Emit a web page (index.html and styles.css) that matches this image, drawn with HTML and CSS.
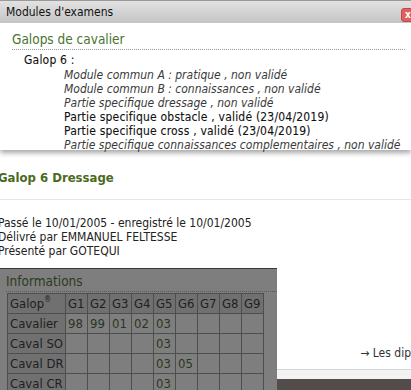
FILE: index.html
```html
<!DOCTYPE html>
<html lang="fr">
<head>
    <meta charset="UTF-8">
    <title>Modules d'examens</title>
    <link rel="stylesheet" href="styles.css">
</head>
<body>
    <div class="dialog">
        <div class="dialog-title">
            Modules d'examens
            <span class="close">x</span>
        </div>
        <div class="dialog-body">
            <h2>Galops de cavalier</h2>
            <div class="galop">Galop 6 :</div>
            <ul class="modules">
                <li>Module commun A : pratique , non validé</li>
                <li>Module commun B : connaissances , non validé</li>
                <li>Partie specifique dressage , non validé</li>
                <li class="ok">Partie specifique obstacle , validé (23/04/2019)</li>
                <li class="ok">Partie specifique cross , validé (23/04/2019)</li>
                <li>Partie specifique connaissances complementaires , non validé</li>
            </ul>
        </div>
    </div>

    <div class="page">
        <h3>Galop 6 Dressage</h3>
        <div class="details">
            <div>Passé le 10/01/2005 - enregistré le 10/01/2005</div>
            <div>Délivré par EMMANUEL FELTESSE</div>
            <div>Présenté par GOTEQUI</div>
        </div>

        <div class="bottom">
            <div class="info-panel">
                <h4>Informations</h4>
                <table class="galops">
                    <colgroup>
                        <col class="col-name">
                        <col span="9" class="col-g">
                    </colgroup>
                    <tr><th>Galop<sup>®</sup></th><th>G1</th><th>G2</th><th>G3</th><th>G4</th><th>G5</th><th>G6</th><th>G7</th><th>G8</th><th>G9</th></tr>
                    <tr><th>Cavalier</th><td>98</td><td>99</td><td>01</td><td>02</td><td>03</td><td></td><td></td><td></td><td></td></tr>
                    <tr><th>Caval SO</th><td></td><td></td><td></td><td></td><td>03</td><td></td><td></td><td></td><td></td></tr>
                    <tr><th>Caval DR</th><td></td><td></td><td></td><td></td><td>03</td><td>05</td><td></td><td></td><td></td></tr>
                    <tr><th>Caval CR</th><td></td><td></td><td></td><td></td><td>03</td><td></td><td></td><td></td><td></td></tr>
                </table>
            </div>
            <div class="side">
                <div class="link">&rarr; Les dip</div>
                <div class="footer-line"></div>
                <div class="footer-bar"></div>
            </div>
        </div>
    </div>
</body>
</html>
```

FILE: styles.css
```css
body {
    margin: 0;
    padding: 0;
    width: 411px;
    height: 390px;
    overflow: hidden;
    background-color: white;
    font-family: "DejaVu Sans Condensed", "DejaVu Sans", sans-serif;
    color: #222;
}
.dialog {
    position: relative;
    z-index: 2;
    background: white;
    box-shadow: 0 3px 5px rgba(0, 0, 0, 0.35);
}
.dialog-title {
    position: relative;
    height: 22px;
    line-height: 22px;
    padding-left: 6px;
    font-size: 12px;
    color: #111;
    border-top: 1px solid #9a9a9a;
    background: linear-gradient(#e2e2e2, #c4c4c4);
}
.close {
    position: absolute;
    right: -4px;
    top: 7px;
    width: 12px;
    height: 12px;
    line-height: 11px;
    text-align: center;
    font-size: 10px;
    font-weight: bold;
    color: white;
    background: #e0605e;
    border: 1px solid #c04848;
    border-radius: 3px;
}
.dialog-body {
    padding: 6px 6px 6px 12px;
    height: 115px;
}
.dialog-body h2 {
    margin: 0;
    font-size: 13.5px;
    font-weight: normal;
    color: #4a7430;
    line-height: 20px;
    border-bottom: 1px dotted #9a9a9a;
}
.galop {
    padding-left: 12px;
    margin-top: 3px;
    font-size: 12px;
    line-height: 14px;
    color: #111;
    -webkit-text-stroke: 0.1px #111;
    letter-spacing: 0.2px;
}
.modules {
    list-style: none;
    margin: 1px 0 0;
    padding-left: 52px;
    font-size: 12px;
    line-height: 14px;
    font-style: italic;
    color: #3a3a3a;
}
.modules .ok {
    font-style: normal;
    color: #111;
    -webkit-text-stroke: 0.1px #111;
    letter-spacing: 0.2px;
}
.page {
    margin-left: -2px;
}
.page h3 {
    margin: 0;
    padding: 20px 0 0;
    height: 29px;
    font-size: 13px;
    line-height: 16px;
    color: #4a6b22;
    border-bottom: 1px solid #e6e6e6;
}
.details {
    padding-top: 16px;
    font-size: 12px;
    line-height: 14px;
    color: #222;
    height: 52px;
}
.bottom {
    display: flex;
    margin-left: 2px;
}
.info-panel {
    width: 280px;
    height: 124px;
    background: #7e7e7e;
    border-top: 1px solid #3a3a3a;
    color: #1f1f1f;
    padding: 0 0 0 6px;
    box-sizing: border-box;
}
.info-panel h4 {
    margin: 2px 0 0;
    font-size: 13.5px;
    font-weight: normal;
    line-height: 20px;
    color: #2c3b1e;
    border-bottom: 1px dotted #5a5a5a;
}
.galops {
    table-layout: fixed;
    width: 256px;
    border-collapse: collapse;
    margin: 1px 0 0 1px;
    font-size: 13px;
    line-height: 18px;
    white-space: nowrap;
}
.col-name {
    width: 58px;
}
.col-g {
    width: 22px;
}
.galops tr {
    height: 20px;
}
.galops th, .galops td {
    border: 1px solid #4e4e4e;
    padding: 0 2px;
    text-align: left;
    vertical-align: middle;
    font-weight: normal;
    overflow: hidden;
}
.galops th {
    background: #707070;
}
.galops td {
    color: #2a3620;
}
.galops sup {
    font-size: 8px;
    line-height: 0;
    vertical-align: baseline;
    position: relative;
    top: -6px;
}
.side {
    flex: 1;
    display: flex;
    flex-direction: column;
}
.link {
    flex: 1;
    padding: 78px 0 0 83px;
    font-size: 12px;
    color: #333;
    white-space: nowrap;
    overflow: hidden;
}
.footer-line {
    height: 9px;
    border-top: 1px solid #d6d6d6;
    background: #f2f2f2;
}
.footer-bar {
    height: 13px;
    background: #524d4a;
}
```
